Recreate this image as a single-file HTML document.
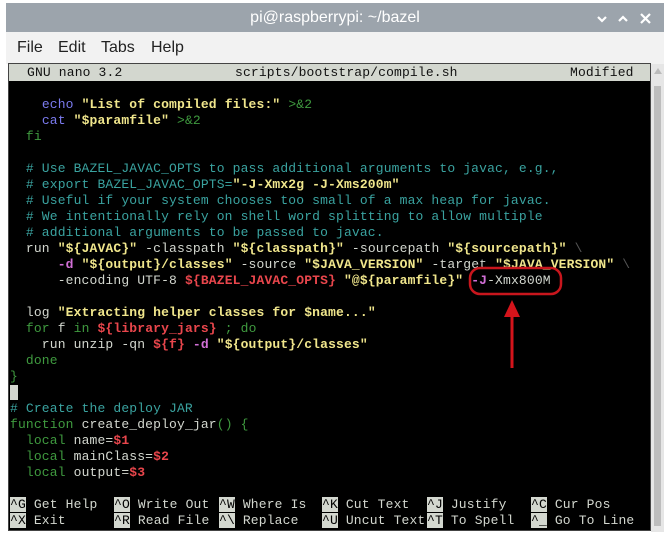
<!DOCTYPE html>
<html><head><meta charset="utf-8"><style>
body{margin:0;width:664px;height:535px;background:#fff;position:relative;overflow:hidden;font-family:"Liberation Sans",sans-serif}
#title{position:absolute;left:6px;top:3px;width:658px;height:29px;background:#9ca4ac;color:#fff;font-size:16px;line-height:29px;text-align:center}
#menu{position:absolute;left:6px;top:32px;width:658px;height:32px;background:#f2f2f2;font-size:16px;color:#222}
#menu span{position:absolute;top:7px}
#term{position:absolute;left:8px;top:63px;width:643px;height:468px;background:#000;border:1px solid #444;box-sizing:border-box}
#sb{position:absolute;left:651px;top:64px;width:13px;height:468px;background:#e6e6e6}
#thumb{position:absolute;left:3px;top:22px;width:7px;height:440px;background:#bdbdbd}
.r{position:absolute;left:10px;height:16px;font-family:"Liberation Mono",monospace;font-size:13px;letter-spacing:0.15px;line-height:16px;white-space:pre;color:#d3d7cf}
.y{color:#f0e68c;font-weight:bold}.g{color:#3f9a3f}.b{color:#7b7bef}.c{color:#3aa3a0}.rd{color:#e9464c;font-weight:bold}.m{color:#d16fd6;font-weight:bold}
.k{background:#d3d7cf;color:#000}
</style></head><body>
<div id="title">pi@raspberrypi: ~/bazel</div>
<svg style="position:absolute;left:595px;top:12px" width="66" height="14"><g stroke="#fff" stroke-width="2.2" fill="none"><path d="M3 5 L7 9 L11 5"/><path d="M24 9 L28 5 L32 9"/><path d="M46 2 L55 11 M55 2 L46 11"/></g></svg>
<div id="menu"><span style="left:11px">File</span><span style="left:52px">Edit</span><span style="left:95px">Tabs</span><span style="left:145px">Help</span></div>
<div id="term"></div>
<div id="sb"><div id="thumb"></div><div style="position:absolute;left:3px;top:4px;width:0;height:0;border-left:4px solid transparent;border-right:4px solid transparent;border-bottom:6px solid #bbb"></div></div>
<div style="position:absolute;left:9px;top:64px;width:641px;height:17px;background:#d3d7cf"></div>
<div class="r" style="left:27px;top:65px;color:#111">GNU nano 3.2</div>
<div class="r" style="left:235px;top:65px;color:#111">scripts/bootstrap/compile.sh</div>
<div class="r" style="left:570px;top:65px;color:#111">Modified</div>
<div class="r" style="top:97px">    <span class="b">echo</span> <span class="y">"List of compiled files:"</span> <span class="g">&gt;&amp;2</span></div>
<div class="r" style="top:113px">    <span class="b">cat</span> <span class="y">"$paramfile"</span> <span class="g">&gt;&amp;2</span></div>
<div class="r" style="top:129px">  <span class="g">fi</span></div>
<div class="r c" style="top:161px">  # Use BAZEL_JAVAC_OPTS to pass additional arguments to javac, e.g.,</div>
<div class="r c" style="top:177px">  # export BAZEL_JAVAC_OPTS=<span class="y">"-J-Xmx2g -J-Xms200m"</span></div>
<div class="r c" style="top:193px">  # Useful if your system chooses too small of a max heap for javac.</div>
<div class="r c" style="top:209px">  # We intentionally rely on shell word splitting to allow multiple</div>
<div class="r c" style="top:225px">  # additional arguments to be passed to javac.</div>
<div class="r" style="top:241px">  run <span class="y">"${JAVAC}"</span> -classpath <span class="y">"${classpath}"</span> -sourcepath <span class="y">"${sourcepath}"</span> <span style="color:#555">\</span></div>
<div class="r" style="top:257px">      <span class="m">-d</span> <span class="y">"${output}/classes"</span> -source <span class="y">"$JAVA_VERSION"</span> -target <span class="y">"$JAVA_VERSION"</span> <span style="color:#555">\</span></div>
<div class="r" style="top:273px">      -encoding UTF-8 <span class="rd">${BAZEL_JAVAC_OPTS}</span> <span class="y">"@${paramfile}"</span> <span class="m">-J</span>-Xmx800M</div>
<div class="r" style="top:305px">  log <span class="y">"Extracting helper classes for $name..."</span></div>
<div class="r" style="top:321px">  <span class="g">for</span> f <span class="g">in</span> <span class="rd">${library_jars}</span> <span class="g">; do</span></div>
<div class="r" style="top:337px">    run unzip -qn <span class="rd">${f}</span> <span class="m">-d</span> <span class="y">"${output}/classes"</span></div>
<div class="r g" style="top:353px">  done</div>
<div class="r g" style="top:369px">}</div>
<div class="r" style="top:385px"><span class="k"> </span></div>
<div class="r c" style="top:401px"># Create the deploy JAR</div>
<div class="r" style="top:417px"><span class="g">function</span> create_deploy_jar<span class="g">() {</span></div>
<div class="r" style="top:433px">  <span class="g">local</span> name=<span class="rd">$1</span></div>
<div class="r" style="top:449px">  <span class="g">local</span> mainClass=<span class="rd">$2</span></div>
<div class="r" style="top:465px">  <span class="g">local</span> output=<span class="rd">$3</span></div>
<div class="r" style="top:497px;left:10px"><span class="k">^G</span> Get Help</div>
<div class="r" style="top:497px;left:114px"><span class="k">^O</span> Write Out</div>
<div class="r" style="top:497px;left:219px"><span class="k">^W</span> Where Is</div>
<div class="r" style="top:497px;left:322px"><span class="k">^K</span> Cut Text</div>
<div class="r" style="top:497px;left:427px"><span class="k">^J</span> Justify</div>
<div class="r" style="top:497px;left:531px"><span class="k">^C</span> Cur Pos</div>
<div class="r" style="top:513px;left:10px"><span class="k">^X</span> Exit</div>
<div class="r" style="top:513px;left:114px"><span class="k">^R</span> Read File</div>
<div class="r" style="top:513px;left:219px"><span class="k">^\</span> Replace</div>
<div class="r" style="top:513px;left:322px"><span class="k">^U</span> Uncut Text</div>
<div class="r" style="top:513px;left:427px"><span class="k">^T</span> To Spell</div>
<div class="r" style="top:513px;left:531px"><span class="k">^_</span> Go To Line</div>
<svg style="position:absolute;left:0;top:0" width="664" height="535">
<rect x="470" y="268" width="91" height="26" rx="10" fill="none" stroke="#c8161d" stroke-width="2.5"/>
<path d="M512 300 L504 317 L520 317 Z" fill="#d4141b"/>
<rect x="510.5" y="315" width="3" height="53" fill="#d4141b"/>
</svg>
</body></html>
